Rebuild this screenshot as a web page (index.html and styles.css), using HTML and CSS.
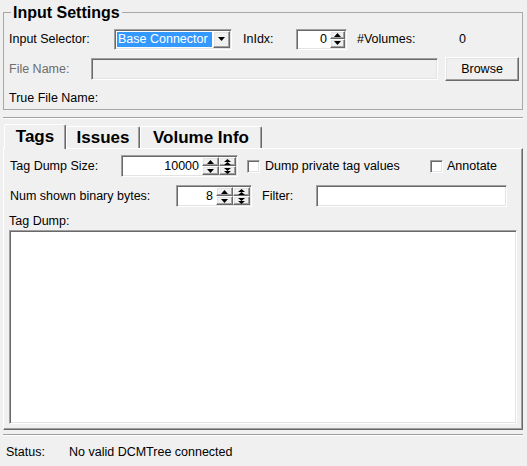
FILE: index.html
```html
<!DOCTYPE html>
<html>
<head>
<meta charset="utf-8">
<link rel="stylesheet" href="styles.css">
</head>
<body>
<div class="app">
  <div class="group">
    <div class="legend"><span>Input Settings</span></div>
    <div class="row row1">
      <span class="lbl w105">Input Selector:</span>
      <div class="combo">
        <span class="combo-sel">Base Connector</span>
        <span class="combo-btn raised"><svg width="7" height="4" viewBox="0 0 7 4"><path d="M0 0H7L3.5 4z"/></svg></span>
      </div>
      <span class="lbl w53 ml11">InIdx:</span>
      <div class="spin w51">
        <span class="spin-val">0</span>
        <span class="spin-btns w15">
          <span class="sb raised"><svg width="7" height="4" viewBox="0 0 7 4"><path d="M3.5 0L7 4H0z"/></svg></span>
          <span class="sb raised"><svg width="7" height="4" viewBox="0 0 7 4"><path d="M0 0H7L3.5 4z"/></svg></span>
        </span>
      </div>
      <span class="lbl w102 ml10">#Volumes:</span>
      <span class="lbl">0</span>
    </div>
    <div class="row row2">
      <span class="lbl w82 dim">File Name:</span>
      <div class="field w347 disabled"></div>
      <div class="button raised w74">Browse</div>
    </div>
    <div class="row row3">
      <span class="lbl">True File Name:</span>
    </div>
  </div>

  <div class="sep sep1"></div>

  <div class="tabs">
    <div class="tab active w62">Tags</div>
    <div class="tab w74t">Issues</div>
    <div class="tab w122">Volume Info</div>
  </div>
  <div class="pane">
    <div class="row prow1">
      <span class="lbl w112 pl1">Tag Dump Size:</span>
      <div class="spin w117">
        <span class="spin-val">10000</span>
        <span class="spin-btns w17">
          <span class="sb raised"><svg width="7" height="4" viewBox="0 0 7 4"><path d="M3.5 0L7 4H0z"/></svg></span>
          <span class="sb raised"><svg width="7" height="4" viewBox="0 0 7 4"><path d="M0 0H7L3.5 4z"/></svg></span>
        </span>
        <span class="spin-btns w17">
          <span class="sb raised"><svg width="7" height="6" viewBox="0 0 7 6"><path d="M3.5 0L7 3H0z M3.5 3L7 6H0z"/></svg></span>
          <span class="sb raised"><svg width="7" height="6" viewBox="0 0 7 6"><path d="M0 0H7L3.5 3z M0 3H7L3.5 6z"/></svg></span>
        </span>
      </div>
      <span class="check ml9"></span>
      <span class="lbl w165 ml5">Dump private tag values</span>
      <span class="check"></span>
      <span class="lbl ml4">Annotate</span>
    </div>
    <div class="row prow2">
      <span class="lbl w167 pl1">Num shown binary bytes:</span>
      <div class="spin w76">
        <span class="spin-val">8</span>
        <span class="spin-btns w17">
          <span class="sb raised"><svg width="7" height="4" viewBox="0 0 7 4"><path d="M3.5 0L7 4H0z"/></svg></span>
          <span class="sb raised"><svg width="7" height="4" viewBox="0 0 7 4"><path d="M0 0H7L3.5 4z"/></svg></span>
        </span>
        <span class="spin-btns w17">
          <span class="sb raised"><svg width="7" height="6" viewBox="0 0 7 6"><path d="M3.5 0L7 3H0z M3.5 3L7 6H0z"/></svg></span>
          <span class="sb raised"><svg width="7" height="6" viewBox="0 0 7 6"><path d="M0 0H7L3.5 3z M0 3H7L3.5 6z"/></svg></span>
        </span>
      </div>
      <span class="lbl w54 ml10">Filter:</span>
      <div class="field w191 white"></div>
    </div>
    <div class="dump-label">Tag Dump:</div>
    <div class="textarea"></div>
  </div>

  <div class="sep sep2"></div>

  <div class="status">
    <span class="lbl w63">Status:</span>
    <span class="lbl">No valid DCMTree connected</span>
  </div>
</div>
</body>
</html>
```

FILE: styles.css
```css
html, body {
  margin: 0;
  padding: 0;
  background: #f0f0f0;
}
body {
  font-family: "Liberation Sans", Arial, sans-serif;
  font-size: 12.5px;
  color: #000;
}
.app {
  width: 527px;
  height: 466px;
  padding-top: 12px;
  box-sizing: border-box;
  overflow: hidden;
}

/* group box */
.group {
  margin-left: 3px;
  width: 520px;
  box-sizing: border-box;
  border: 1px solid #a8a8a8;
  padding: 0 0 1px 5px;
}
.legend {
  display: flex;
  height: 19px;
  margin-top: -10px;
}
.legend span {
  background: #f0f0f0;
  padding: 0 2px;
  margin-left: 2px;
  font-weight: bold;
  font-size: 16px;
  line-height: 19px;
}
.row {
  display: flex;
  align-items: center;
}
.row1 { margin-top: 6px; height: 22px; }
.row2 { margin-top: 7px; height: 24px; }
.row3 { margin-top: 7px; height: 20px; }

.lbl { white-space: nowrap; flex: none; }
.dim { color: #6d6d6d; }
.w105 { width: 105px; }
.w53 { width: 53px; }
.w102 { width: 102px; }
.w82 { width: 82px; }
.w112 { width: 112px; box-sizing: border-box; }
.w165 { width: 165px; }
.w167 { width: 167px; box-sizing: border-box; }
.w54 { width: 54px; }
.w63 { width: 63px; }
.pl1 { padding-left: 1px; }
.ml4 { margin-left: 4px; }
.ml5 { margin-left: 5px; }
.ml9 { margin-left: 9px; }
.ml10 { margin-left: 10px; }
.ml11 { margin-left: 11px; }

/* 3D styles */
.raised {
  box-sizing: border-box;
  border: 1px solid;
  border-color: #fff #696969 #696969 #fff;
  box-shadow: inset -1px -1px 0 #a0a0a0, inset 1px 1px 0 #e3e3e3;
  background: #f0f0f0;
}

/* combo */
.combo {
  flex: none;
  width: 118px;
  height: 21px;
  box-sizing: border-box;
  padding: 1px;
  display: flex;
  background: #fff;
  border: 1px solid;
  border-color: #a0a0a0 #fff #fff #a0a0a0;
  box-shadow: inset 1px 1px 0 #696969, inset -1px -1px 0 #e3e3e3;
}
.combo-sel {
  flex: 1;
  margin: 1px;
  background: #3399ff;
  color: #fff;
  padding-left: 1px;
  line-height: 15px;
  white-space: nowrap;
  overflow: hidden;
}
.combo-btn {
  width: 17px;
  flex: none;
  display: flex;
  align-items: center;
  justify-content: center;
}

/* spin boxes */
.spin {
  flex: none;
  height: 21px;
  box-sizing: border-box;
  padding: 1px;
  display: flex;
  background: #fff;
  border: 1px solid;
  border-color: #a0a0a0 #fff #fff #a0a0a0;
  box-shadow: inset 1px 1px 0 #696969, inset -1px -1px 0 #e3e3e3;
}
.prow1 .spin, .prow2 .spin { height: 22px; }
.w51 { width: 51px; }
.w117 { width: 117px; }
.w76 { width: 76px; }
.spin-val {
  flex: 1;
  text-align: right;
  padding-right: 3px;
  line-height: 17px;
}
.prow1 .spin-val, .prow2 .spin-val { line-height: 19px; }
.spin-btns {
  flex: none;
  display: flex;
  flex-direction: column;
}
.w15 { width: 15px; }
.w17 { width: 17px; }
.sb {
  flex: 1;
  display: flex;
  align-items: center;
  justify-content: center;
}
svg path { fill: #000; }

/* fields */
.field {
  flex: none;
  height: 22px;
  box-sizing: border-box;
  border: 1px solid;
  border-color: #a0a0a0 #fff #fff #a0a0a0;
  box-shadow: inset 1px 1px 0 #696969, inset -1px -1px 0 #e3e3e3;
}
.disabled { background: #f0f0f0; }
.white { background: #fff; }
.w347 { width: 347px; }
.w191 { width: 191px; }
.button {
  flex: none;
  height: 24px;
  margin-left: 7px;
  display: flex;
  align-items: center;
  justify-content: center;
}
.w74 { width: 74px; }

/* separators */
.sep {
  margin-left: 3px;
  width: 520px;
  height: 1px;
  background: #a0a0a0;
  border-bottom: 1px solid #fff;
}
.sep1 { margin-top: 7px; }
.sep2 { margin-top: 4px; }

/* tabs */
.tabs {
  display: flex;
  align-items: flex-end;
  margin-top: 5px;
  margin-left: 4px;
  height: 24px;
}
.tab {
  box-sizing: border-box;
  height: 22px;
  border-top: 1px solid #fff;
  border-left: 1px solid #fff;
  border-right: 1px solid #696969;
  box-shadow: inset -1px 0 0 #a0a0a0;
  border-radius: 2px 2px 0 0;
  font-weight: bold;
  font-size: 17px;
  display: flex;
  align-items: center;
  justify-content: center;
  background: #f0f0f0;
}
.tab.active {
  height: 25px;
  margin-bottom: -1px;
  padding-bottom: 1px;
  position: relative;
  z-index: 1;
}
.w62 { width: 62px; }
.w74t { width: 74px; }
.w122 { width: 122px; }

.pane {
  margin-left: 3px;
  width: 520px;
  height: 282px;
  box-sizing: border-box;
  border: 1px solid;
  border-color: #fff #696969 #696969 #fff;
  box-shadow: inset -1px -1px 0 #a0a0a0;
  padding: 6px 0 5px 5px;
}
.prow1 { height: 22px; }
.prow2 { height: 22px; margin-top: 8px; }
.check {
  flex: none;
  width: 13px;
  height: 13px;
  box-sizing: border-box;
  background: #fff;
  border: 1px solid;
  border-color: #a0a0a0 #fff #fff #a0a0a0;
  box-shadow: inset 1px 1px 0 #696969, inset -1px -1px 0 #e3e3e3;
}
.dump-label {
  margin-top: 7px;
  line-height: 15px;
  height: 15px;
}
.textarea {
  margin-top: 1px;
  width: 508px;
  height: 194px;
  box-sizing: border-box;
  background: #fff;
  border: 1px solid;
  border-color: #a0a0a0 #fff #fff #a0a0a0;
  box-shadow: inset 1px 1px 0 #696969, inset -1px -1px 0 #e3e3e3;
}

.status {
  display: flex;
  margin-top: 8px;
  padding-left: 6px;
  line-height: 16px;
}
```
